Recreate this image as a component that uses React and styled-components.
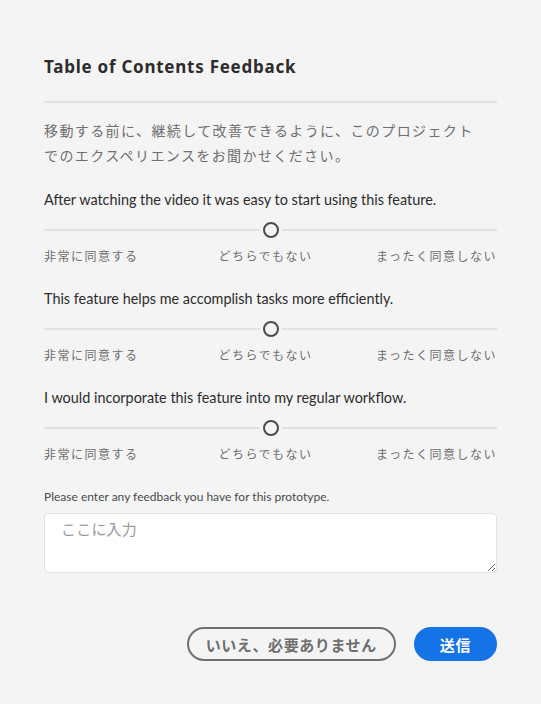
import React from "react";
import styled, { createGlobalStyle } from "styled-components";

const GlobalStyle = createGlobalStyle`
  html, body {
    margin: 0;
    padding: 0;
    background: #f4f4f4;
  }
  body {
    font-family: Lato, "Noto Sans CJK JP", sans-serif;
  }
`;

const Panel = styled.div`
  width: 541px;
  height: 704px;
  box-sizing: border-box;
  padding: 55px 44px 0;
  display: flex;
  flex-direction: column;
  background: #f4f4f4;
`;

const Title = styled.h2`
  margin: 0;
  font-family: "Noto Sans", "Noto Sans CJK JP", sans-serif;
  font-size: 17px;
  font-weight: 700;
  line-height: 24px;
  letter-spacing: 0.75px;
  color: #2c2c2c;
`;

const Divider = styled.hr`
  margin: 22px 0 0;
  border: 0;
  height: 2px;
  background: #e1e1e1;
`;

const Intro = styled.p`
  margin: 15px 0 0;
  max-width: 436px;
  font-family: "Noto Sans CJK JP", sans-serif;
  font-size: 14px;
  line-height: 25px;
  letter-spacing: 1.4px;
  color: #6e6e6e;
`;

const Question = styled.div`
  margin-top: ${(p) => (p.$first ? "22px" : "24px")};
  display: flex;
  flex-direction: column;
`;

const Prompt = styled.div`
  font-size: 14.4px;
  line-height: 20px;
  color: #2c2c2c;
`;

const Slider = styled.div`
  margin-top: 10px;
  height: 20px;
  display: flex;
  align-items: center;
  gap: 3px;
`;

const Track = styled.div`
  flex: 1;
  height: 2px;
  background: #e1e1e1;
`;

const Thumb = styled.div`
  width: 16px;
  height: 16px;
  box-sizing: border-box;
  border: 2px solid #4b4b4b;
  border-radius: 50%;
  background: #f4f4f4;
`;

const Scale = styled.div`
  margin-top: 7px;
  display: grid;
  grid-template-columns: 1fr 1fr 1fr;
  font-family: "Noto Sans CJK JP", sans-serif;
  font-size: 12px;
  line-height: 18px;
  letter-spacing: 1.5px;
  color: #6e6e6e;
`;

const ScaleLabel = styled.span`
  text-align: ${(p) => p.$align};
  padding-right: ${(p) => (p.$align === "center" ? "10px" : "0")};
  white-space: nowrap;
`;

const FieldLabel = styled.label`
  margin-top: 26px;
  font-size: 12px;
  line-height: 16px;
  color: #4b4b4b;
`;

const TextArea = styled.textarea`
  margin-top: 8px;
  height: 60px;
  box-sizing: border-box;
  padding: 4px 16px;
  border: 1px solid #e1e1e1;
  border-radius: 4px;
  background: #fff;
  font-family: "Noto Sans CJK JP", sans-serif;
  font-size: 15px;
  line-height: 22px;
  letter-spacing: 0.2px;
  color: #2c2c2c;
  resize: vertical;

  &::placeholder {
    color: #9a9a9a;
  }
`;

const Actions = styled.div`
  margin-top: 54px;
  display: flex;
  justify-content: flex-end;
  gap: 18px;
`;

const Button = styled.button`
  height: 34px;
  box-sizing: border-box;
  padding: 0 ${(p) => (p.$primary ? "24px" : "17px")};
  border-radius: 17px;
  border: 2px solid ${(p) => (p.$primary ? "#1473e6" : "#707070")};
  background: ${(p) => (p.$primary ? "#1473e6" : "transparent")};
  color: ${(p) => (p.$primary ? "#fff" : "#6e6e6e")};
  font-family: "Noto Sans CJK JP", sans-serif;
  font-size: 15px;
  font-weight: 700;
  letter-spacing: 0.6px;
  cursor: pointer;
`;

const questions = [
  "After watching the video it was easy to start using this feature.",
  "This feature helps me accomplish tasks more efficiently.",
  "I would incorporate this feature into my regular workflow.",
];

const RatingQuestion = ({ text, first }) => (
  <Question $first={first}>
    <Prompt>{text}</Prompt>
    <Slider>
      <Track />
      <Thumb />
      <Track />
    </Slider>
    <Scale>
      <ScaleLabel $align="left">非常に同意する</ScaleLabel>
      <ScaleLabel $align="center">どちらでもない</ScaleLabel>
      <ScaleLabel $align="right">まったく同意しない</ScaleLabel>
    </Scale>
  </Question>
);

const App = () => (
  <>
    <GlobalStyle />
    <Panel>
      <Title>Table of Contents Feedback</Title>
      <Divider />
      <Intro>
        移動する前に、継続して改善できるように、このプロジェクトでのエクスペリエンスをお聞かせください。
      </Intro>
      {questions.map((q, i) => (
        <RatingQuestion key={q} text={q} first={i === 0} />
      ))}
      <FieldLabel>Please enter any feedback you have for this prototype.</FieldLabel>
      <TextArea placeholder="ここに入力" />
      <Actions>
        <Button>いいえ、必要ありません</Button>
        <Button $primary>送信</Button>
      </Actions>
    </Panel>
  </>
);

export default App;
